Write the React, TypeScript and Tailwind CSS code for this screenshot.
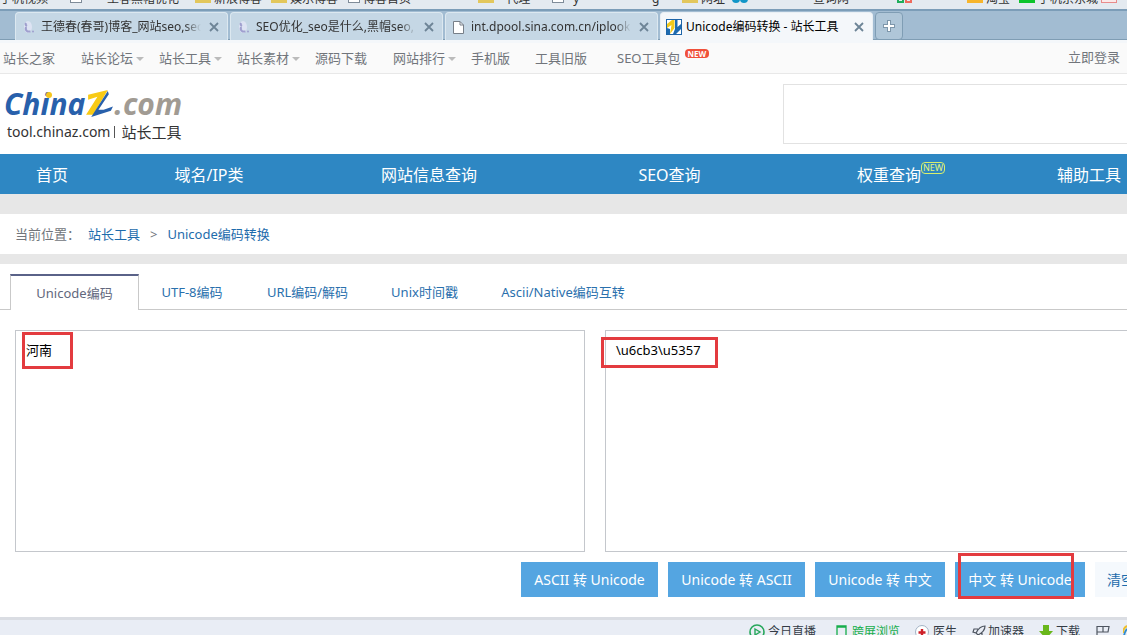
import React from "react";

type Bookmark = { icon?: "folder" | "page" | "blue" | "duo" | "orange" | "green" | "red"; label: string; width: string };

const bookmarks: Bookmark[] = [
  { label: "手机视频", width: "w-[70px]" },
  { icon: "page", label: "", width: "w-[37px]" },
  { label: "王春黑帽优化", width: "w-[88px]" },
  { icon: "folder", label: "新浪博客", width: "w-[76px]" },
  { icon: "folder", label: "娱乐博客", width: "w-[77px]" },
  { icon: "page", label: "博客首页", width: "w-[130px]" },
  { icon: "folder", label: "   代理", width: "w-[74px]" },
  { icon: "page", label: "  y", width: "w-[100px]" },
  { label: "g", width: "w-[30px]" },
  { icon: "folder", label: "网址", width: "w-[50px]" },
  { icon: "blue", label: "", width: "w-[81px]" },
  { label: "查询网", width: "w-[84px]" },
  { icon: "duo", label: "", width: "w-[70px]" },
  { icon: "orange", label: "淘宝", width: "w-[52px]" },
  { icon: "green", label: "手机京东城", width: "w-[82px]" },
  { icon: "red", label: "", width: "w-[30px]" },
];

function BookmarkIcon({ kind }: { kind: NonNullable<Bookmark["icon"]> }) {
  if (kind === "page") return <span className="h-3 w-3 border border-[#7f8c99] bg-white" />;
  if (kind === "folder") return <span className="h-3 w-4 bg-[#e3c75c]" />;
  if (kind === "orange") return <span className="h-3 w-4 bg-[#f7b52c]" />;
  if (kind === "green") return <span className="h-3 w-4 bg-[#0cc42b]" />;
  if (kind === "red") return <span className="h-3 w-4 border border-[#e88b8b] bg-[#fbe9e9]" />;
  if (kind === "blue")
    return (
      <span className="flex">
        <span className="h-3 w-2 rounded-full bg-[#1296c8]" />
        <span className="h-3 w-2 rounded-full bg-[#1296c8]" />
      </span>
    );
  return (
    <span className="flex gap-px">
      <span className="h-3 w-[7px] border-2 border-[#1fae5b]" />
      <span className="h-3 w-[7px] border-2 border-[#ef6a5c]" />
    </span>
  );
}

function Moon() {
  return (
    <svg viewBox="0 0 16 16" className="h-4 w-4 shrink-0" aria-hidden="true">
      <ellipse cx="7" cy="8" rx="4" ry="6" fill="#dde3f3" />
      <path d="M5 4q-1 2 1 3M5 8q-1 3 1.500 4.500h3" stroke="#9f9fce" strokeWidth="2" fill="none" />
      <circle cx="12" cy="12.500" r="1" fill="#9f9fce" />
    </svg>
  );
}

function PageIcon() {
  return (
    <svg viewBox="0 0 16 16" className="h-4 w-4 shrink-0" aria-hidden="true">
      <path d="M2.500 2.500h6.500l3.500 3.500v8.500h-10z" fill="#fff" stroke="#777f88" />
      <path d="M9 2.500V6h3.500" fill="none" stroke="#777f88" />
    </svg>
  );
}

function SiteIcon() {
  return (
    <svg viewBox="0 0 16 16" className="h-4 w-4 shrink-0" aria-hidden="true">
      <rect x=".5" y=".5" width="15" height="15" fill="#fff" stroke="#1e65a8" />
      <path d="M1 5l5-4h2.500v8L4 15l1.500-9L1 9z" fill="#f2c91b" />
      <path d="M1 9l3 1v5H1z" fill="#1e6bb0" />
      <path d="M9 1h2.500v7L15 5v5l-5 5H7l2-5z" fill="#1e6bb0" />
    </svg>
  );
}

const browserTabs = [
  { icon: <Moon />, title: "王德春(春哥)博客_网站seo,seo" },
  { icon: <Moon />, title: "SEO优化_seo是什么,黑帽seo," },
  { icon: <PageIcon />, title: "int.dpool.sina.com.cn/iplookup" },
  { icon: <SiteIcon />, title: "Unicode编码转换 - 站长工具", active: true },
];

function Cross() {
  return (
    <svg viewBox="0 0 10 10" className="h-[10px] w-[10px]" aria-hidden="true">
      <path d="M1 1l8 8M9 1l-8 8" stroke="#6d8496" strokeWidth="1.800" />
    </svg>
  );
}

const topLinks = [
  { label: "站长之家", width: "w-[78px]" },
  { label: "站长论坛", width: "w-[78px]", menu: true },
  { label: "站长工具", width: "w-[78px]", menu: true },
  { label: "站长素材", width: "w-[78px]", menu: true },
  { label: "源码下载", width: "w-[78px]" },
  { label: "网站排行", width: "w-[78px]", menu: true },
  { label: "手机版", width: "w-[64px]" },
  { label: "工具旧版", width: "w-[82px]" },
];

const mainLinks = ["首页", "域名/IP类", "网站信息查询", "SEO查询", "权重查询", "辅助工具"];

const codeTabs = [
  { label: "UTF-8编码", width: "w-[106px]" },
  { label: "URL编码/解码", width: "w-[125px]" },
  { label: "Unix时间戳", width: "w-[109px]" },
  { label: "Ascii/Native编码互转", width: "w-[168px]" },
];

const actions = [
  { label: "ASCII 转 Unicode", width: "w-[137px]" },
  { label: "Unicode 转 ASCII", width: "w-[137px]" },
  { label: "Unicode 转 中文", width: "w-[130px]" },
];

function Logo() {
  return (
    <a href="#home" className="flex w-fit flex-col pl-1 pt-[10px]">
      <span className="flex h-10 items-center font-['Open_Sans',sans-serif] text-[30px] font-bold italic leading-10">
        <span className="relative text-[#2860ab]">
          China
          <span className="absolute left-[42px] top-[8px] h-[6px] w-[6px] rounded-full bg-[#f6c51c]" />
        </span>
        <svg viewBox="0 0 28 28" className="h-[29px] w-[29px]" aria-hidden="true">
          <path d="M3 4.500L22 0 8 24H1l11-17.500-9 3z" fill="#f8ca15" />
          <path d="M22 1l1 3-10 15h5l9-3-2 4-19 6z" fill="#2860ab" />
        </svg>
        <span className="text-[#a19b93]">.com</span>
      </span>
      <span className="flex items-center gap-1 pl-[3px] leading-4 text-[#333]">
        <span className="text-sm leading-4">tool.chinaz.com</span>
        <span className="h-3 w-px bg-[#555]" />
        <span className="pl-[2px] text-[15px] leading-4">站长工具</span>
      </span>
    </a>
  );
}

function Mark({ className }: { className: string }) {
  return <span aria-hidden="true" className={`pointer-events-none absolute border-3 border-[#e33b3f] ${className}`} />;
}

function StatusBar() {
  return (
    <footer className="h-[18px] shrink-0 overflow-hidden border-t-[3px] border-[#dadde3] bg-[#e9edf5] text-xs text-[#333b45]">
      <div className="flex h-6 items-center justify-end">
        <span className="flex w-[87px] shrink-0 items-center gap-[3px]">
          <svg viewBox="0 0 16 16" className="h-4 w-4" fill="none" aria-hidden="true">
            <circle cx="8" cy="8" r="7" stroke="#27a75b" strokeWidth="1.600" />
            <path d="M6 5l5 3-5 3z" stroke="#27a75b" strokeWidth="1.400" />
          </svg>
          今日直播
        </span>
        <span className="flex w-[79px] shrink-0 items-center gap-[5px] text-[#16ad4b]">
          <svg viewBox="0 0 11 16" className="h-4 w-[11px]" fill="none" aria-hidden="true">
            <path d="M1 2h9v13H1zM1 3h9" stroke="#16ad4b" strokeWidth="1.300" />
          </svg>
          跨屏浏览
        </span>
        <span className="flex w-[57px] shrink-0 items-center gap-1">
          <svg viewBox="0 0 14 14" className="h-[14px] w-[14px]" aria-hidden="true">
            <circle cx="7" cy="7" r="6.500" fill="#fff" stroke="#a3b3c5" />
            <path d="M7 4v7M3.500 7.500h7" stroke="#ce2029" strokeWidth="2.400" />
          </svg>
          医生
        </span>
        <span className="flex w-[67px] shrink-0 items-center gap-[2px]">
          <svg viewBox="0 0 14 14" className="h-[14px] w-[14px]" fill="none" stroke="#4e5560" strokeWidth="1.200" aria-hidden="true">
            <path d="M13 1C8 1 6 4 4 8l2 2c4-2 7-4 7-9zM6 4L2 4l-1 3 3 1M10 8v4l-3 1-1-3M3 10l-2 3" />
          </svg>
          加速器
        </span>
        <span className="flex w-[57px] shrink-0 items-center gap-[3px]">
          <svg viewBox="0 0 14 14" className="h-[14px] w-[14px]" aria-hidden="true">
            <path d="M4 0h6v6h4l-7 8-7-8h4z" fill="#69b71b" />
          </svg>
          下载
        </span>
        <span className="flex w-[27px] shrink-0">
          <svg viewBox="0 0 14 14" className="h-[14px] w-[14px]" fill="none" stroke="#4e5560" strokeWidth="1.200" aria-hidden="true">
            <path d="M1 14V1.500h12L12 7H7V1.500M1 7h6" />
          </svg>
        </span>
        <svg viewBox="0 0 4 16" className="h-4 w-1 shrink-0" fill="none" aria-hidden="true">
          <path d="M4 5Q1 8 1 14" stroke="#2f8bd0" strokeWidth="2" />
          <path d="M4 2Q0 4 0 9" stroke="#eebf2c" strokeWidth="2" />
        </svg>
      </div>
    </footer>
  );
}

export default function App() {
  return (
    <div className="flex h-screen flex-col overflow-hidden bg-white font-['Noto_Sans','Noto_Sans_CJK_SC',sans-serif] text-[13px] text-[#333]">
      <div className="flex h-[9px] shrink-0 items-end overflow-hidden bg-[#e4eaf0] text-xs leading-4">
        {bookmarks.map((b, i) => (
          <span key={i} className={`flex shrink-0 items-end gap-[3px] whitespace-pre pb-[6px] ${b.width}`}>
            {b.icon && <BookmarkIcon kind={b.icon} />}
            {b.label && <span className="-mb-1">{b.label}</span>}
          </span>
        ))}
      </div>

      <div className="flex h-[31px] shrink-0 gap-[2px] border-b border-t-2 border-b-[#7f9db4] border-t-[#7c9db8] bg-[#a2bcd2] pl-[15px] pt-px">
        {browserTabs.map((tab) => (
          <div
            key={tab.title}
            className={`flex h-7 w-[213px] shrink-0 items-center rounded-t-sm border border-b-0 pl-[5px] pr-2 text-xs ${
              tab.active ? "-mb-px border-[#e9eff4] bg-[#f4f7fa] text-black" : "border-[#dce8f0] bg-[#c5d7e5] text-[#333]"
            }`}
          >
            {tab.icon}
            <span className={`ml-1 flex-1 overflow-hidden whitespace-nowrap ${tab.active ? "" : "mask-r-from-90%"}`}>{tab.title}</span>
            <button type="button" aria-label="关闭标签页" className="ml-2">
              <Cross />
            </button>
          </div>
        ))}
        <button type="button" aria-label="新建标签页" className="flex h-7 w-7 items-center justify-center rounded-sm border border-[#7f9db4] bg-[#afc6d8]">
          <svg viewBox="0 0 12 12" className="h-3 w-3" aria-hidden="true">
            <path d="M6 0v12M0 6h12" stroke="#7d96aa" strokeWidth="4" />
            <path d="M6 1v10M1 6h10" stroke="#fff" strokeWidth="2" />
          </svg>
        </button>
      </div>

      <main className="min-h-0 flex-1 overflow-hidden">
        <div className="flex h-[34px] items-center justify-between border-b border-t-[3px] border-b-[#e8e8e8] border-t-[#f4f7fa] bg-[#fafafa] pl-[3px] pr-[7px] text-[#71757b]">
          <nav className="flex pt-px">
            {topLinks.map((l) => (
              <a key={l.label} href="#top" className={`flex shrink-0 items-center gap-[3px] ${l.width}`}>
                {l.label}
                {l.menu && <span className="border-x-4 border-t-4 border-x-transparent border-t-[#bbb]" />}
              </a>
            ))}
            <a href="#seo" className="flex shrink-0 items-start gap-1">
              SEO工具包
              <span className="rounded-sm bg-[#f0503a] px-[3px] text-[8px] font-bold leading-[9px] text-white">NEW</span>
            </a>
          </nav>
          <a href="#login" className="pb-px">立即登录</a>
        </div>

        <header className="flex h-20 items-start justify-between">
          <Logo />
          <div className="mt-[10px] h-[60px] w-[344px] border border-r-0 border-[#e2e2e2]" />
        </header>

        <div className="w-[1195px]">
          <nav className="grid h-10 grid-cols-[104px_210px_230px_251px_188px_212px] items-center bg-[#2e87c3] pt-[2px] text-base text-white">
            {mainLinks.map((label) => (
              <a key={label} href="#nav" className="relative justify-self-center">
                {label}
                {label === "权重查询" && (
                  <span className="absolute -top-px left-full rounded-sm border border-[#d8ef6c] px-px text-[9px] leading-[10px] text-[#e5f57a]">NEW</span>
                )}
              </a>
            ))}
          </nav>
          <div className="h-5 bg-[#e7e7e7]" />
          <div className="flex h-10 items-center pl-[15px] pt-px text-[#71757b]">
            当前位置：
            <a href="#tool" className="ml-2 text-[#1d6cac]">站长工具</a>
            <span className="mx-[10px]">&gt;</span>
            <a href="#unicode" className="text-[#1d6cac]">Unicode编码转换</a>
          </div>
          <div className="h-[10px] bg-[#e7e7e7]" />

          <div className="flex h-[46px] items-end border-b border-[#c9c9c9] pl-[10px]">
            <a href="#unicode" className="-mb-px flex h-9 w-[129px] items-center justify-center border border-b-0 border-t-2 border-[#c9c9c9] border-t-[#5a6288] bg-white pt-px text-[#62687d]">
              Unicode编码
            </a>
            {codeTabs.map((t) => (
              <a key={t.label} href="#code" className={`flex h-[34px] items-center justify-center pt-[2px] text-[#2a70ad] ${t.width}`}>
                {t.label}
              </a>
            ))}
          </div>

          <div className="flex gap-5 pl-[15px] pt-5">
            <div className="relative h-[222px] w-[570px]">
              <textarea aria-label="原文" defaultValue="河南" className="block h-full w-full resize-none border border-[#c4c7cc] p-[10px] text-black outline-none" />
              <Mark className="left-[7px] top-[2px] h-[37px] w-[51px]" />
            </div>
            <div className="relative h-[222px] w-[570px]">
              <textarea aria-label="结果" defaultValue={"\\u6cb3\\u5357"} className="block h-full w-full resize-none border border-[#c4c7cc] p-[10px] text-black outline-none" />
              <Mark className="-left-1 top-[7px] h-[31px] w-[117px]" />
            </div>
          </div>

          <div className="flex justify-end gap-[10px] pr-5 pt-[10px] text-sm text-white">
            {actions.map((a) => (
              <button key={a.label} type="button" className={`h-[35px] bg-[#54a5e1] ${a.width}`}>
                {a.label}
              </button>
            ))}
            <div className="relative">
              <button type="button" className="h-[35px] w-[130px] bg-[#54a5e1]">中文 转 Unicode</button>
              <Mark className="-top-[9px] left-[3px] h-[46px] w-[116px]" />
            </div>
            <button type="button" className="h-[35px] bg-[#f5f9fd] px-3 text-[#1d6cac]">清空结果</button>
          </div>
        </div>
      </main>

      <StatusBar />
    </div>
  );
}
